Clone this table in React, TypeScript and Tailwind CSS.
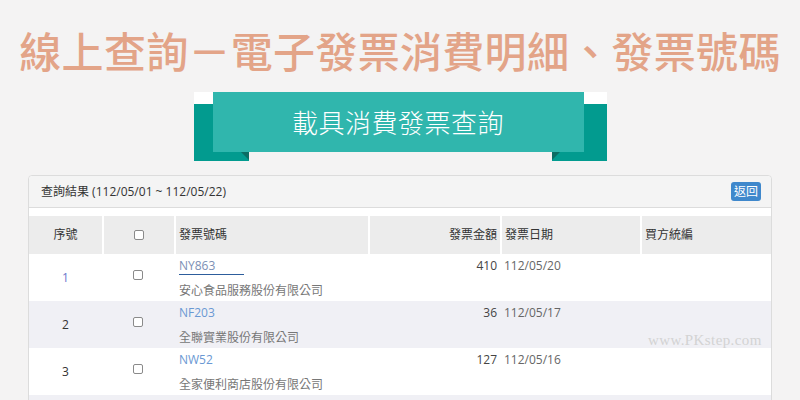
import React from 'react';

type Row = {
  no: number;
  inv: string;
  company: string;
  amount: string;
  date: string;
};

const rows: Row[] = [
  { no: 1, inv: 'NY863', company: '安心食品服務股份有限公司', amount: '410', date: '112/05/20' },
  { no: 2, inv: 'NF203', company: '全聯實業股份有限公司', amount: '36', date: '112/05/17' },
  { no: 3, inv: 'NW52', company: '全家便利商店股份有限公司', amount: '127', date: '112/05/16' },
];

const cols = 'grid grid-cols-[73px_72px_194px_132px_140px_1fr]';

function Box() {
  return <span className="block w-[10px] h-[10px] border border-[#8a8a8a] rounded-[2px] bg-white" />;
}

function Ribbon() {
  return (
    <div className="relative mx-auto mt-[21px] w-[413px] h-[69px]">
      {/* ribbon drawing */}
      <svg width="413" height="69" viewBox="0 0 413 69" className="block">
        <rect x="0" y="0" width="413" height="12" fill="#ffffff" />
        <rect x="0" y="12" width="55" height="57" fill="#029b8f" />
        <rect x="358" y="12" width="55" height="57" fill="#029b8f" />
        <polygon points="47,60 55,60 55,68" fill="#0b6d64" />
        <polygon points="358,60 366,60 358,68" fill="#0b6d64" />
        <rect x="19" y="0" width="371" height="60" fill="#30b6ad" />
      </svg>
      <div className="absolute left-[19px] top-0 w-[371px] h-[60px] flex items-center justify-center text-white text-[26px] leading-none tracking-[0.5px] font-light font-['Noto_Sans_CJK_TC',sans-serif]">
        載具消費發票查詢
      </div>
    </div>
  );
}

export default function App() {
  return (
    <div className="w-[800px] h-[400px] overflow-hidden bg-[#f4f3f3] flex flex-col relative font-['Open_Sans','Noto_Sans_CJK_TC',sans-serif]">
      {/* Title */}
      <h1 className="pt-[29px] h-[71px] text-center text-[42px] leading-[42px] tracking-[0.3px] font-medium text-[#e3a488] font-['Noto_Sans_CJK_TC',sans-serif] whitespace-nowrap">
        線上查詢－電子發票消費明細、發票號碼
      </h1>

      <Ribbon />

      {/* Panel */}
      <div className="mt-[14px] mx-[28px] flex-1 border border-[#dcdcdc] rounded-t-[4px] bg-white">
        <div className="h-[32px] bg-[#f4f4f4] border-b border-[#dcdcdc] rounded-t-[4px] px-[12px] flex items-center justify-between">
          <span className="text-[12px] text-[#333]">查詢結果 (112/05/01 ~ 112/05/22)</span>
          <button className="w-[30px] h-[19px] rounded-[3px] bg-[#3f88cc] text-white text-[12px] leading-[19px] mr-[-2px]">
            返回
          </button>
        </div>

        <div className="pt-[8px]">
          {/* header row */}
          <div className={`${cols} h-[38px] bg-[#ececec] text-[12px] text-[#333]`}>
            <div className="flex items-center justify-center">序號</div>
            <div className="border-l-2 border-white flex items-center justify-center">
              <Box />
            </div>
            <div className="border-l-2 border-white flex items-center pl-[3px]">發票號碼</div>
            <div className="border-l-2 border-white flex items-center justify-end pr-[3px]">發票金額</div>
            <div className="border-l-2 border-white flex items-center pl-[3px]">發票日期</div>
            <div className="border-l-2 border-white flex items-center pl-[3px]">買方統編</div>
          </div>

          {rows.map((r, i) => (
            <div
              key={r.no}
              className={`${cols} h-[47px] text-[12px] leading-[20px] ${i % 2 === 1 ? 'bg-[#f0f0f5]' : 'bg-white'}`}
            >
              <div className={`flex items-center justify-center ${r.no === 1 ? 'text-[#6b78cc]' : 'text-[#333]'}`}>
                {r.no}
              </div>
              <div className="flex justify-center pt-[16px]">
                <Box />
              </div>
              <div className="pl-[5px] pt-[2px]">
                {r.no === 1 ? (
                  <span className="inline-block w-[65px] border-b border-[#2d5d9c] leading-[17px] text-[#7c8fb5]">
                    {r.inv}
                  </span>
                ) : (
                  <span className="text-[#6a98d3]">{r.inv}</span>
                )}
                <div className="mt-[4px] text-[#777] whitespace-nowrap font-['Noto_Sans_CJK_TC',sans-serif]">
                  {r.company}
                </div>
              </div>
              <div className="text-right pr-[3px] pt-[2px] text-[#444]">{r.amount}</div>
              <div className="pl-[4px] pt-[2px] text-[#666]">{r.date}</div>
              <div />
            </div>
          ))}
          {/* next row, only its top edge is visible */}
          <div className="h-[47px] bg-[#f0f0f5]" />
        </div>
      </div>

      {/* watermark */}
      <span className="absolute left-[648px] top-[331px] text-[15px] leading-[18px] text-[#d3d3d3] font-['Liberation_Serif',serif] tracking-[0.4px]">
        www.PKstep.com
      </span>
    </div>
  );
}
